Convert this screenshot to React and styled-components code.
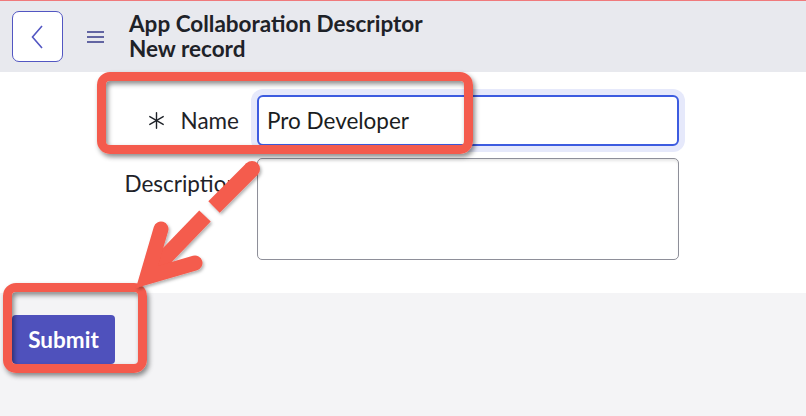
import React from "react"
import styled, { createGlobalStyle } from "styled-components"

const GlobalStyle = createGlobalStyle`
  html, body {
    margin: 0;
    padding: 0;
    background: #f4f4f6;
    font-family: Lato, "Open Sans", sans-serif;
    color: #1e2228;
  }
  * {
    box-sizing: border-box;
  }
`

const Page = styled.div`
  position: relative;
  width: 806px;
  height: 416px;
  overflow: hidden;
  background: #f4f4f6;
`

const Header = styled.header`
  display: flex;
  align-items: flex-start;
  height: 72px;
  padding: 10px 12px 0;
  background: #e8e9ee;
  border-top: 1px solid #f07a7c;
`

const BackButton = styled.button`
  display: flex;
  align-items: center;
  justify-content: center;
  width: 51px;
  height: 51px;
  padding: 0;
  background: #fff;
  border: 1px solid #5256c2;
  border-radius: 7px;
`

const MenuButton = styled.span`
  display: flex;
  align-items: center;
  justify-content: center;
  width: 17px;
  height: 51px;
  margin: 0 25px 0 24px;
`

const Title = styled.h1`
  margin: 1px 0 0;
  font-size: 22.5px;
  line-height: 24.5px;
  font-weight: 700;
  color: #1e2228;
`

const Body = styled.main`
  background: #fff;
  padding: 23px 0 33px;
`

const Form = styled.div`
  display: grid;
  grid-template-columns: 239px 422px;
  column-gap: 18px;
  row-gap: 12px;
`

const Label = styled.label`
  display: flex;
  align-items: ${(p) => (p.$top ? "flex-start" : "center")};
  justify-content: flex-end;
  gap: 16px;
  padding-top: ${(p) => (p.$top ? "12px" : "0")};
  font-size: 22.5px;
  line-height: 27px;
  color: #1e2228;
  white-space: nowrap;
`

const TextInput = styled.input`
  width: 422px;
  height: 51px;
  padding: 0 8px;
  border: 2px solid #3d5ce0;
  border-radius: 6px;
  box-shadow: 0 0 0 6px #e6e9fb;
  font-family: Lato, sans-serif;
  font-size: 22.5px;
  color: #1a1d21;
  outline: none;
  background: #fff;
`

const TextArea = styled.textarea`
  width: 422px;
  height: 102px;
  border: 1px solid #8e8f99;
  border-radius: 5px;
  box-shadow: inset 0 3px 3px -1px rgba(0, 0, 0, 0.1);
  resize: none;
  background: #fff;
`

const Footer = styled.footer`
  padding: 22px 12px;
`

const SubmitButton = styled.button`
  width: 103px;
  height: 49px;
  padding: 0;
  border: none;
  border-radius: 4px;
  background: #4f51bc;
  color: #fff;
  font-family: Lato, sans-serif;
  font-size: 22.5px;
  font-weight: 700;
`

const Highlight = styled.div`
  position: absolute;
  left: ${(p) => p.$x}px;
  top: ${(p) => p.$y}px;
  width: ${(p) => p.$w}px;
  height: ${(p) => p.$h}px;
  border: 9px solid #f45b4d;
  border-radius: 13px;
  box-shadow: 2px 3px 5px rgba(0, 0, 0, 0.45),
    inset 2px 3px 5px rgba(0, 0, 0, 0.45);
  pointer-events: none;
`

const ArrowLayer = styled.svg`
  position: absolute;
  left: 0;
  top: 0;
  pointer-events: none;
`

function ChevronLeft() {
  return (
    <svg width="14" height="24" viewBox="0 0 14 24">
      <path d="M11 1 L1.5 12 L11 23" fill="none" stroke="#5256c2" strokeWidth="1.6" />
    </svg>
  )
}

function Hamburger() {
  return (
    <svg width="17" height="14" viewBox="0 0 17 14">
      <g stroke="#3f438f" strokeWidth="1.6">
        <line x1="0" y1="2" x2="17" y2="2" />
        <line x1="0" y1="7" x2="17" y2="7" />
        <line x1="0" y1="12" x2="17" y2="12" />
      </g>
    </svg>
  )
}

function Required() {
  return (
    <svg width="17" height="17" viewBox="0 0 17 17">
      <g stroke="#1e2228" strokeWidth="1.4" strokeLinecap="round">
        <line x1="8.5" y1="0.8" x2="8.5" y2="16.2" />
        <line x1="1.8" y1="4.6" x2="15.2" y2="12.4" />
        <line x1="1.8" y1="12.4" x2="15.2" y2="4.6" />
      </g>
    </svg>
  )
}

function Arrow() {
  return (
    <ArrowLayer width="806" height="416">
      <defs>
        <filter id="arrowShadow" x="-20%" y="-20%" width="140%" height="140%">
          <feDropShadow dx="1.5" dy="2" stdDeviation="1.5" floodColor="#000" floodOpacity="0.3" />
        </filter>
      </defs>
      <g filter="url(#arrowShadow)" fill="none" stroke="#f45b4d" strokeWidth="16">
        <circle cx="252" cy="169" r="8" fill="#f45b4d" stroke="none" />
        <line x1="252" y1="169" x2="214" y2="207" strokeLinecap="butt" />
        <line x1="205" y1="216" x2="150" y2="273" strokeLinecap="butt" />
        <path
          d="M161 229 L147 277 L195 263"
          strokeWidth="15"
          strokeLinecap="round"
          strokeLinejoin="miter"
        />
      </g>
    </ArrowLayer>
  )
}

export default function App() {
  return (
    <>
      <GlobalStyle />
      <Page>
        <Header>
          <BackButton aria-label="Back">
            <ChevronLeft />
          </BackButton>
          <MenuButton>
            <Hamburger />
          </MenuButton>
          <Title>
            App Collaboration Descriptor
            <br />
            New record
          </Title>
        </Header>
        <Body>
          <Form>
            <Label>
              <Required />
              Name
            </Label>
            <TextInput defaultValue="Pro Developer" />
            <Label $top>Description</Label>
            <TextArea />
          </Form>
        </Body>
        <Footer>
          <SubmitButton>Submit</SubmitButton>
        </Footer>
        <Highlight $x={97} $y={72} $w={376} $h={82} />
        <Highlight $x={3} $y={283} $w={144} $h={90} />
        <Arrow />
      </Page>
    </>
  )
}
